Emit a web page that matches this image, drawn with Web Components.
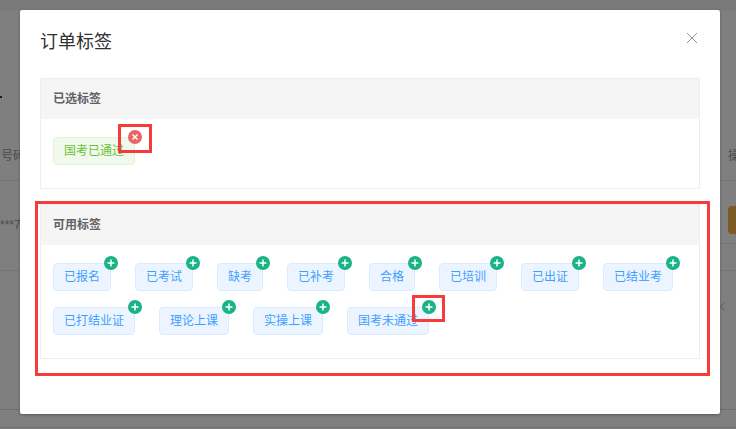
<!DOCTYPE html>
<html>
<head>
<meta charset="utf-8">
<style>
html, body { margin: 0; height: 100%; overflow: hidden; }
body { font-family: "Liberation Sans", "Noto Sans CJK SC", sans-serif; }
</style>
</head>
<body>
<back-page>
  <order-dialog title-text="订单标签">
    <tag-section heading="已选标签">
      <order-tag type="success" action="remove">国考已通过</order-tag>
    </tag-section>
    <tag-section heading="可用标签">
      <order-tag>已报名</order-tag>
      <order-tag>已考试</order-tag>
      <order-tag>缺考</order-tag>
      <order-tag>已补考</order-tag>
      <order-tag>合格</order-tag>
      <order-tag>已培训</order-tag>
      <order-tag>已出证</order-tag>
      <order-tag>已结业考</order-tag>
      <order-tag>已打结业证</order-tag>
      <order-tag>理论上课</order-tag>
      <order-tag>实操上课</order-tag>
      <order-tag>国考未通过</order-tag>
    </tag-section>
  </order-dialog>
</back-page>
<script>
class BackPage extends HTMLElement {
    constructor() {
        super();
        this.attachShadow({ mode: 'open' });
        this.shadowRoot.innerHTML = `
            <style>
                :host { display: block; width: 736px; height: 429px; position: relative; overflow: hidden; background: #7f7f7f; color: #4b4b4e; font-size: 12px; line-height: 16px; white-space: nowrap; }
                .top { box-sizing: border-box; height: 10px; background: #7a7a7a; border-bottom: 1px solid #787878; }
                .crumb { box-sizing: border-box; height: 90px; padding-top: 86px; }
                .crumb i { display: block; width: 2px; height: 2px; background: #0d1a3a; }
                .head { box-sizing: border-box; height: 81px; display: flex; justify-content: space-between; padding: 48px 0 0 1px; border-bottom: 1px solid #757575; }
                .head span:last-child { width: 8px; overflow: hidden; flex: none; }
                .row { box-sizing: border-box; height: 90px; display: flex; justify-content: space-between; border-bottom: 1px solid #757575; }
                .no { padding-top: 36px; }
                .ops { box-sizing: border-box; width: 16px; height: 63px; padding: 25px 0 0 8px; border-bottom: 1px solid #757575; }
                .ops i { display: block; width: 8px; height: 28px; background: #7a5a20; border-radius: 4px 0 0 4px; }
                .pager { box-sizing: border-box; height: 139px; padding: 31px 11px 0 0; display: flex; justify-content: flex-end; border-bottom: 1px solid #6e6e6e; }
                .pager svg { display: block; width: 5px; height: 9px; }
                .foot { box-sizing: border-box; height: 18px; border-bottom: 1px solid #6e6e6e; }
                .mask { position: absolute; left: 20px; top: 10px; color: #303133; }
            </style>
            <div class="top"></div>
            <div class="crumb"><i></i></div>
            <div class="head"><span>号码</span><span>操作</span></div>
            <div class="row"><span class="no">***7</span><span class="ops"><i></i></span></div>
            <div class="pager"><svg viewBox="0 0 5 9"><path d="M4.5.5l-4 4 4 4" stroke="#666b74" stroke-width="1.2" fill="none"/></svg></div>
            <div class="foot"></div>
            <div class="mask"><slot></slot></div>
        `;
    }
}

class OrderDialog extends HTMLElement {
    constructor() {
        super();
        this.attachShadow({ mode: 'open' });
        this.shadowRoot.innerHTML = `
            <style>
                :host { display: block; width: 700px; height: 404px; box-sizing: border-box; padding: 20px; background: #fff; border-radius: 2px; box-shadow: 0 1px 3px rgba(0,0,0,.3); position: relative; }
                .title { font-size: 18px; line-height: 24px; }
                .close { position: absolute; left: 667px; top: 23px; width: 10px; height: 10px; }
                .body { display: flex; flex-direction: column; gap: 15px; margin-top: 24px; }
            </style>
            <div class="title"></div>
            <svg class="close" viewBox="0 0 10 10"><path d="M0 0l10 10M10 0L0 10" stroke="#909399" fill="none"/></svg>
            <div class="body"><slot></slot></div>
        `;
    }
    connectedCallback() {
        this.shadowRoot.querySelector('.title').textContent = this.getAttribute('title-text');
    }
}

class TagSection extends HTMLElement {
    constructor() {
        super();
        this.attachShadow({ mode: 'open' });
        this.shadowRoot.innerHTML = `
            <style>
                :host { display: block; border: 1px solid #ebeef5; color: #606266; }
                .head { height: 40px; line-height: 40px; padding: 0 12px; background: #f5f5f5; font-size: 12px; font-weight: bold; }
                .tags { display: flex; flex-wrap: wrap; gap: 16px 24px; padding: 18px 12px 23px; }
            </style>
            <div class="head"></div>
            <div class="tags"><slot></slot></div>
        `;
    }
    connectedCallback() {
        this.shadowRoot.querySelector('.head').textContent = this.getAttribute('heading');
    }
}

class OrderTag extends HTMLElement {
    constructor() {
        super();
        this.attachShadow({ mode: 'open' });
        this.shadowRoot.innerHTML = `
            <style>
                :host { display: block; position: relative; box-sizing: border-box; height: 28px; line-height: 26px; padding: 0 10px; font-size: 12px; white-space: nowrap; border-radius: 4px; border: 1px solid #d9ecff; background: #ecf5ff; color: #409eff; }
                :host([type="success"]) { border-color: #e1f3d8; background: #f0f9eb; color: #67c23a; }
                .badge { position: absolute; right: -8px; top: -8px; width: 14px; height: 14px; border-radius: 50%; background: #1ab385; }
                .badge svg { display: block; width: 14px; height: 14px; }
                :host([action="remove"]) .badge { background: #ec6565; }
            </style>
            <slot></slot>
            <span class="badge"><svg viewBox="0 0 14 14"></svg></span>
        `;
    }
    connectedCallback() {
        const d = this.getAttribute('action') === 'remove' ? 'M4.5 4.5l5 5M9.5 4.5l-5 5' : 'M3.5 7h7M7 3.5v7';
        this.shadowRoot.querySelector('svg').innerHTML = `<path d="${d}" stroke="#fff" stroke-width="1.5" fill="none"/>`;
    }
}

class MarkBox extends HTMLElement {
    constructor() {
        super();
        this.attachShadow({ mode: 'open' });
        this.shadowRoot.innerHTML = `
            <style>
                :host { display: block; position: absolute; box-sizing: border-box; border: 3px solid #f73b3b; pointer-events: none; }
            </style>
        `;
    }
}

customElements.define('back-page', BackPage);
customElements.define('order-dialog', OrderDialog);
customElements.define('tag-section', TagSection);
customElements.define('order-tag', OrderTag);
customElements.define('mark-box', MarkBox);

// red marks drawn over the screenshot
[[118, 124, 34, 29], [412, 295, 33, 27], [35, 201, 675, 175]].forEach(([x, y, w, h]) => {
    const m = document.createElement('mark-box');
    m.style.cssText = `left:${x}px;top:${y}px;width:${w}px;height:${h}px`;
    document.body.appendChild(m);
});
</script>
</body>
</html>
